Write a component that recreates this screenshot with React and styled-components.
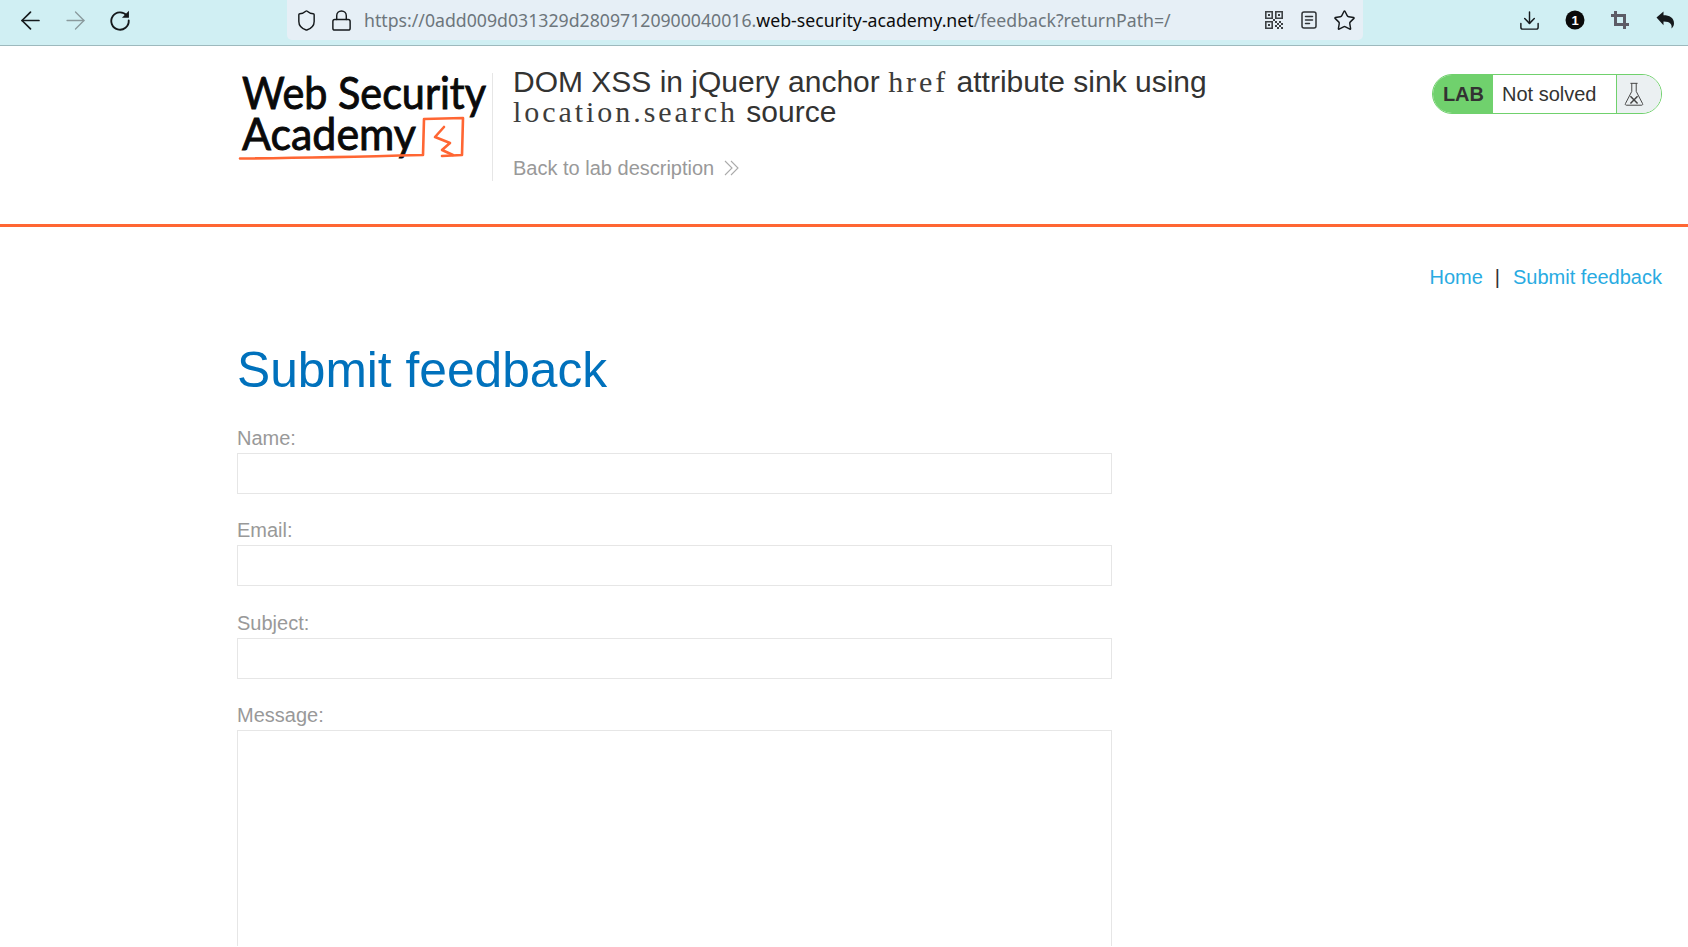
import React from "react";
import styled, { createGlobalStyle } from "styled-components";
import { ArrowLeft, ArrowRight, Shield, Lock, Star, Download } from "lucide-react";

const Global = createGlobalStyle`
  html, body { margin: 0; padding: 0; height: 947px; overflow: hidden; background: #fff; }
  body { font-family: "Liberation Sans", Arial, sans-serif; }
`;

const Toolbar = styled.div`
  height: 46px; box-sizing: border-box; display: flex; align-items: flex-start;
  background: #d0eff3; border-bottom: 1px solid #9db9bd; padding-left: 18px; padding-right: 11px;
`;
const NavGroup = styled.div`
  display: flex; align-items: center; gap: 21px; height: 40px; width: 269px; flex: none; color: #15191c;
`;
const ToolIcon = styled.span`
  display: inline-flex; width: 24px; height: 24px; align-items: center; justify-content: center; flex: none;
  color: ${p => p.$color || "#15191c"};
  margin-right: ${p => p.$nudge || 0}px;
  svg { flex: none; }
`;
const UrlBar = styled.div`
  width: 1076px; height: 40px; flex: none; background: #e6eff6; border-radius: 0 0 5px 5px;
  display: flex; align-items: center; padding: 0 7px 0 7px; box-sizing: border-box; gap: 11px;
`;
const UrlText = styled.div`
  font-family: "Noto Sans", sans-serif; font-size: 17.7px; color: #6d767c; white-space: nowrap;
  flex: 1;
  b { font-weight: 400; color: #0c0c0d; }
`;
const UrlIcons = styled.div`display: flex; align-items: center; gap: 11px;`;
const RightTools = styled.div`
  display: flex; align-items: center; margin-left: auto; gap: 21px; height: 40px;
`;
const Header = styled.header`
  height: 181px; box-sizing: border-box; display: flex; align-items: flex-start;
  border-bottom: 3px solid #ff6633; padding: 21px 26px 0 237px;
`;
const LogoSvg = styled.svg`
  width: 255px; height: 108px; flex: none; margin-top: 6px; border-right: 1px solid #e6e6e6; overflow: visible;
`;
const TitleBlock = styled.div`padding-left: 20px; width: 720px; flex: none;`;
const Title = styled.h2`
  margin: 0; font-size: 30px; line-height: 30px; font-weight: 400; color: #333332;
`;
const Code = styled.code`
  font-family: "Liberation Serif", serif; font-size: 30px; color: #3d3d3c; letter-spacing: 2.95px;
`;
const BackLink = styled.div`
  display: flex; align-items: center; gap: 10px; margin-top: 29px; font-size: 20px; line-height: 24px; color: #999;
`;
const Badge = styled.div`
  margin-left: auto; margin-top: 7px; height: 40px; width: 230px; box-sizing: border-box; display: flex; flex: none;
  border: 1px solid #70d16d; border-radius: 20px; overflow: hidden; font-size: 20px;
`;
const BadgeLab = styled.div`
  width: 60px; background: #70d16d; color: #333332; font-weight: 700; display: flex; align-items: center; justify-content: flex-end;
  padding-right: 9px; box-sizing: border-box;
`;
const BadgeText = styled.div`
  flex: 1; display: flex; align-items: center; padding-left: 9px; color: #333332; border-right: 1px solid #70d16d;
`;
const BadgeIcon = styled.div`
  width: 44px; flex: none; background: #ebf0f2; display: flex; align-items: center; padding-left: 7px; box-sizing: border-box;
`;
const Content = styled.main`padding: 0 26px 0 237px;`;
const TopLinks = styled.nav`
  display: flex; justify-content: flex-end; align-items: center; margin-top: 38px; font-size: 20px; line-height: 24px; color: #333332;
  a { color: #29abe2; text-decoration: none; }
  span { margin: 0 13px 0 12px; }
`;
const Heading = styled.h1`
  margin: 49px 0 0; font-size: 49.7px; line-height: 64px; font-weight: 400; color: #0071bc;
`;
const Form = styled.form`width: 875px; margin-top: 24px;`;
const Field = styled.div`margin-bottom: 24.4px; &:last-child { margin-bottom: 0; }`;
const Label = styled.label`display: block; font-size: 20px; line-height: 24px; color: #999; margin-bottom: 3px;`;
const Input = styled.input`
  display: block; width: 100%; height: 41px; box-sizing: border-box; border: 1px solid #e6e6e6; padding: 0; background: #fff; outline: 0; border-radius: 0;
`;
const TextArea = styled.textarea`
  display: block; width: 100%; height: 216px; box-sizing: border-box; border: 1px solid #e6e6e6; border-bottom: 0; padding: 0; background: #fff; outline: 0; resize: none; border-radius: 0;
`;

const Reload = () => (
  <svg width="24" height="24" viewBox="0 0 22 22" fill="none">
    <path d="M17.3 7A8 8 0 1 0 19 11.5" stroke="#15191c" strokeWidth="1.7" strokeLinecap="round" />
    <path d="M19.2 2.6V9h-6.4z" fill="#15191c" />
  </svg>
);
const Qr = () => (
  <svg width="18" height="18" viewBox="0 0 18 18" fill="#3d4144">
    <path fillRule="evenodd" d="M0 0h8v8H0zM1.6 1.6v4.8h4.8V1.6zM10 0h8v8h-8zM11.6 1.6v4.8h4.8V1.6zM0 10h8v8H0zM1.6 11.6v4.8h4.8v-4.8z" />
    <path d="M3 3h2v2H3zM13 3h2v2h-2zM3 13h2v2H3zM8 8h2v2H8zM10 10h2v2h-2zM14 10h2v2h-2zM12 12h2v2h-2zM16 12h2v2h-2zM10 14h2v2h-2zM14 14h2v2h-2zM12 16h2v2h-2zM16 16h2v2h-2z" />
  </svg>
);
const Reader = () => (
  <svg width="16" height="18" viewBox="0 0 16 18" fill="none" stroke="#2f3336" strokeWidth="1.5" strokeLinecap="round">
    <rect x="1" y="1" width="14" height="16" rx="2" />
    <path d="M4.5 5.5h7M4.5 9h7M4.5 12.5h4" />
  </svg>
);
const OneBadge = () => (
  <svg width="20" height="20" viewBox="0 0 20 20">
    <circle cx="10" cy="10" r="9.5" fill="#0a0a0a" />
    <text x="10" y="14.6" textAnchor="middle" fontFamily="Liberation Sans" fontWeight="700" fontSize="13" fill="#fff">1</text>
  </svg>
);
const CropIcon = () => (
  <svg width="20" height="20" viewBox="0 0 20 20" fill="none" stroke="#5c5c66" strokeWidth="3">
    <path d="M5.5 1v13.5H19M1 5.5h13.5V19" />
  </svg>
);
const Reply = () => (
  <svg width="19" height="18" viewBox="0 0 19 18" fill="#15191c">
    <path d="M0.5 6.5 7.5 0.5v3.8c6 0 10.5 2.6 10.5 8 0 2.4-1 4-2.6 5.2 1-3.6-.6-7-7.9-7v3.8z" />
  </svg>
);
const Flask = () => (
  <svg width="20" height="25" viewBox="0 0 22 28" fill="none" stroke="#444" strokeWidth="1.1">
    <path d="M7 1.5h8M8.5 1.5v9L1.5 24a1.2 1.2 0 0 0 1 2h17a1.2 1.2 0 0 0 1-2l-7-13.5v-9" />
    <path d="M7 16l8 8M15 16l-8 8" strokeWidth="1.7" />
  </svg>
);
const Chevrons = () => (
  <svg width="16" height="16" viewBox="0 0 16 16" fill="none" stroke="#aaa" strokeWidth="1.1">
    <path d="M1 1l7 7-7 7M7 1l7 7-7 7" />
  </svg>
);
const Logo = () => (
  <LogoSvg viewBox="0 0 255 108">
    <g fontFamily="Lato, sans-serif" fontSize="44" fill="#0a0a0a" stroke="#0a0a0a" strokeWidth="0.9">
      <text x="5" y="36" textLength="244" lengthAdjust="spacingAndGlyphs">Web Security</text>
      <text x="5" y="77" textLength="174" lengthAdjust="spacingAndGlyphs">Academy</text>
    </g>
    <g fill="none" stroke="#ff6633" strokeLinecap="round" strokeLinejoin="round">
      <path d="M3 85.5C60 85 130 83.5 186 82L187 46 226 45 225 82 205 83" strokeWidth="2.6" />
      <path d="M207 54 198 64 213 70 205 77 216 82" strokeWidth="2.6" />
    </g>
  </LogoSvg>
);

export default function App() {
  return (
    <>
      <Global />
      <Toolbar>
        <NavGroup>
          <ToolIcon><ArrowLeft size={29} strokeWidth={1.4} /></ToolIcon>
          <ToolIcon $color="#8a9a9d"><ArrowRight size={29} strokeWidth={1.1} /></ToolIcon>
          <ToolIcon><Reload /></ToolIcon>
        </NavGroup>
        <UrlBar>
          <ToolIcon><Shield size={23} strokeWidth={1.5} /></ToolIcon>
          <ToolIcon><Lock size={23} strokeWidth={1.5} /></ToolIcon>
          <UrlText>https://0add009d031329d28097120900040016.<b>web-security-academy.net</b>/feedback?returnPath=/</UrlText>
          <UrlIcons>
            <ToolIcon><Qr /></ToolIcon>
            <ToolIcon><Reader /></ToolIcon>
            <ToolIcon><Star size={23} strokeWidth={1.5} /></ToolIcon>
          </UrlIcons>
        </UrlBar>
        <RightTools>
          <ToolIcon $nudge={1}><Download size={23} strokeWidth={1.5} /></ToolIcon>
          <ToolIcon><OneBadge /></ToolIcon>
          <ToolIcon><CropIcon /></ToolIcon>
          <ToolIcon><Reply /></ToolIcon>
        </RightTools>
      </Toolbar>
      <Header>
        <Logo />
        <TitleBlock>
          <Title>DOM XSS in jQuery anchor <Code>href</Code> attribute sink using <Code>location.search</Code> source</Title>
          <BackLink>Back to lab description <Chevrons /></BackLink>
        </TitleBlock>
        <Badge>
          <BadgeLab>LAB</BadgeLab>
          <BadgeText>Not solved</BadgeText>
          <BadgeIcon><Flask /></BadgeIcon>
        </Badge>
      </Header>
      <Content>
        <TopLinks><a href="#home">Home</a><span>|</span><a href="#fb">Submit feedback</a></TopLinks>
        <Heading>Submit feedback</Heading>
        <Form>
          <Field><Label>Name:</Label><Input /></Field>
          <Field><Label>Email:</Label><Input /></Field>
          <Field><Label>Subject:</Label><Input /></Field>
          <Field><Label>Message:</Label><TextArea /></Field>
        </Form>
      </Content>
    </>
  );
}
